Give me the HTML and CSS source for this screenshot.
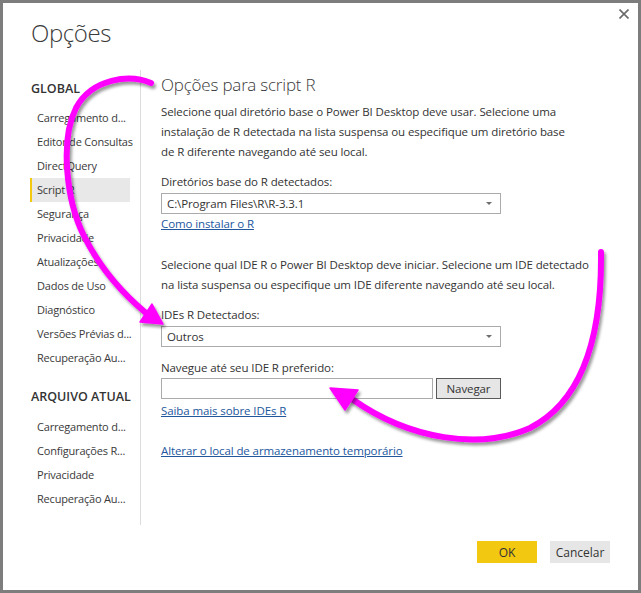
FILE: index.html
```html
<!DOCTYPE html>
<html lang="pt-BR">
<head>
<meta charset="utf-8">
<title>Opções</title>
<link rel="stylesheet" href="styles.css">
</head>
<body>
<div class="window">
  <div class="header">
    <h1 class="title">Opções</h1>
    <button class="close" aria-label="Fechar">
      <svg width="10" height="10" viewBox="0 0 10 10"><path d="M0.5 0.5 L9.5 9.5 M9.5 0.5 L0.5 9.5" stroke="#6b6b6b" stroke-width="1.6" fill="none"/></svg>
    </button>
  </div>
  <div class="body">
    <nav class="sidebar">
      <div class="section-title first">GLOBAL</div>
      <ul class="nav-list">
        <li class="nav-item">Carregamento d...</li>
        <li class="nav-item">Editor de Consultas</li>
        <li class="nav-item">DirectQuery</li>
        <li class="nav-item active">Script R</li>
        <li class="nav-item">Segurança</li>
        <li class="nav-item">Privacidade</li>
        <li class="nav-item">Atualizações</li>
        <li class="nav-item">Dados de Uso</li>
        <li class="nav-item">Diagnóstico</li>
        <li class="nav-item">Versões Prévias d...</li>
        <li class="nav-item">Recuperação Au...</li>
      </ul>
      <div class="section-title">ARQUIVO ATUAL</div>
      <ul class="nav-list">
        <li class="nav-item">Carregamento d...</li>
        <li class="nav-item">Configurações R...</li>
        <li class="nav-item">Privacidade</li>
        <li class="nav-item">Recuperação Au...</li>
      </ul>
    </nav>
    <main class="content">
      <h2 class="heading">Opções para script R</h2>
      <p class="text">Selecione qual diretório base o Power BI Desktop deve usar. Selecione uma<br>instalação de R detectada na lista suspensa ou especifique um diretório base<br>de R diferente navegando até seu local.</p>
      <div class="label gap-s">Diretórios base do R detectados:</div>
      <div class="select"><span>C:\Program Files\R\R-3.3.1</span><span class="caret"></span></div>
      <a class="link" href="#">Como instalar o R</a>
      <p class="text gap-l">Selecione qual IDE R o Power BI Desktop deve iniciar. Selecione um IDE detectado<br>na lista suspensa ou especifique um IDE diferente navegando até seu local.</p>
      <div class="label gap-s">IDEs R Detectados:</div>
      <div class="select"><span>Outros</span><span class="caret"></span></div>
      <div class="label gap-m">Navegue até seu IDE R preferido:</div>
      <div class="browse-row">
        <div class="input"></div>
        <button class="btn-browse">Navegar</button>
      </div>
      <a class="link gap-xs" href="#">Saiba mais sobre IDEs R</a>
      <a class="link gap-l2" href="#">Alterar o local de armazenamento temporário</a>
    </main>
  </div>
  <div class="footer">
    <button class="btn btn-ok">OK</button>
    <button class="btn btn-cancel">Cancelar</button>
  </div>
</div>
<svg class="annotations" width="641" height="593" viewBox="0 0 641 593">
  <defs>
    <filter id="shadow" x="-20%" y="-20%" width="140%" height="140%">
      <feDropShadow dx="2" dy="3" stdDeviation="1.5" flood-color="#000" flood-opacity="0.4"/>
    </filter>
  </defs>
  <g filter="url(#shadow)" fill="none" stroke="#ff00ff" stroke-width="6" stroke-linecap="round">
    <path d="M151,83 C130,74 92,78 76,108 C60,140 66,200 84,236 C100,268 122,293 146,313"/>
    <path d="M601,252 C602,330 585,400 530,428 C480,450 410,440 352,399"/>
  </g>
  <g filter="url(#shadow)" fill="#ff00ff" stroke="#ff00ff" stroke-width="1.5" stroke-linejoin="round">
    <polygon points="163,324 140,322 152,304"/>
    <polygon points="330,388 358,390 345,410"/>
  </g>
</svg>
</body>
</html>
```
FILE: styles.css
```css
* { box-sizing: border-box; }

html, body {
  margin: 0;
  padding: 0;
  background: #ffffff;
}

body {
  position: relative;
  width: 641px;
  height: 593px;
  font-family: "Open Sans", "Noto Sans", sans-serif;
  font-size: 11.5px;
  color: #333333;
}

.window {
  width: 641px;
  height: 593px;
  border: 3px solid #7d7d7d;
  background: #ffffff;
  display: flex;
  flex-direction: column;
}

.header {
  height: 67px;
  flex: none;
  display: flex;
  justify-content: space-between;
  align-items: flex-start;
  padding-left: 28px;
}

.title {
  margin: 13px 0 0 0;
  font-family: "Open Sans Light", "Lato Light", "Open Sans", sans-serif;
  font-size: 24px;
  font-weight: 300;
  letter-spacing: -0.4px;
  line-height: 34px;
  color: #3a3a3a;
}

.close {
  margin: 6px 9px 0 0;
  width: 10px;
  height: 10px;
  padding: 0;
  border: 0;
  background: transparent;
  display: flex;
}

.body {
  height: 455px;
  flex: none;
  display: flex;
}

.sidebar {
  width: 138px;
  flex: none;
  border-right: 1px solid #dcdcdc;
}

.section-title {
  padding: 19px 0 0 28px;
  margin-bottom: 10px;
  line-height: 16px;
  font-size: 12.5px;
  font-weight: 600;
  color: #333333;
}

.section-title.first {
  padding-top: 11px;
  margin-bottom: 9px;
}

.nav-list {
  list-style: none;
  margin: 0;
  padding: 0;
}

.nav-item {
  margin-left: 27px;
  width: 100px;
  height: 24px;
  line-height: 24px;
  padding-left: 5px;
  border-left: 2px solid transparent;
  white-space: nowrap;
  font-size: 11px;
  letter-spacing: -0.2px;
  color: #3a3a3a;
}

.nav-item.active {
  background: #e8e8e8;
  border-left-color: #f2c811;
}

.content {
  flex: 1;
  padding-left: 20px;
  display: flex;
  flex-direction: column;
  align-items: flex-start;
  letter-spacing: -0.1px;
}

.heading {
  margin: 3px 0 5px 0;
  font-family: "Open Sans Light", "Lato Light", "Open Sans", sans-serif;
  font-size: 17px;
  font-weight: 300;
  line-height: 24px;
  letter-spacing: -0.2px;
  color: #3a3a3a;
}

.text {
  margin: 0;
  line-height: 20px;
  white-space: nowrap;
}

.label {
  line-height: 20px;
}

.gap-s { margin-top: 10px; }
.gap-m { margin-top: 11px; }
.gap-l { margin-top: 21px; }
.gap-xs { margin-top: 2px; }
.gap-l2 { margin-top: 20px; }

.select {
  margin-top: 1px;
  width: 340px;
  height: 21px;
  border: 1px solid #ababab;
  padding: 0 8px 0 5px;
  display: flex;
  align-items: center;
  justify-content: space-between;
  line-height: 19px;
}

.caret {
  width: 0;
  height: 0;
  border-left: 3px solid transparent;
  border-right: 3px solid transparent;
  border-top: 3px solid #6e6e6e;
}

.link {
  line-height: 20px;
  color: #22579e;
  text-decoration: underline;
}

.browse-row {
  display: flex;
  gap: 3px;
}

.input {
  width: 272px;
  height: 21px;
  border: 1px solid #ababab;
}

.btn-browse {
  width: 65px;
  height: 21px;
  padding: 0;
  border: 1px solid #5a5a5a;
  background: #e6e6e6;
  font-family: inherit;
  font-size: 11.5px;
  letter-spacing: -0.1px;
  color: #333333;
}

.footer {
  flex: 1;
  display: flex;
  justify-content: flex-end;
  align-items: flex-start;
  gap: 13px;
  padding: 16px 28px 0 0;
}

.btn {
  width: 60px;
  height: 22px;
  border: 0;
  padding: 0;
  font-family: inherit;
  font-size: 12px;
  color: #333333;
}

.btn-ok { background: #f2c811; }
.btn-cancel { background: #e6e6e6; }

.annotations {
  position: absolute;
  left: 0;
  top: 0;
  pointer-events: none;
}
```
